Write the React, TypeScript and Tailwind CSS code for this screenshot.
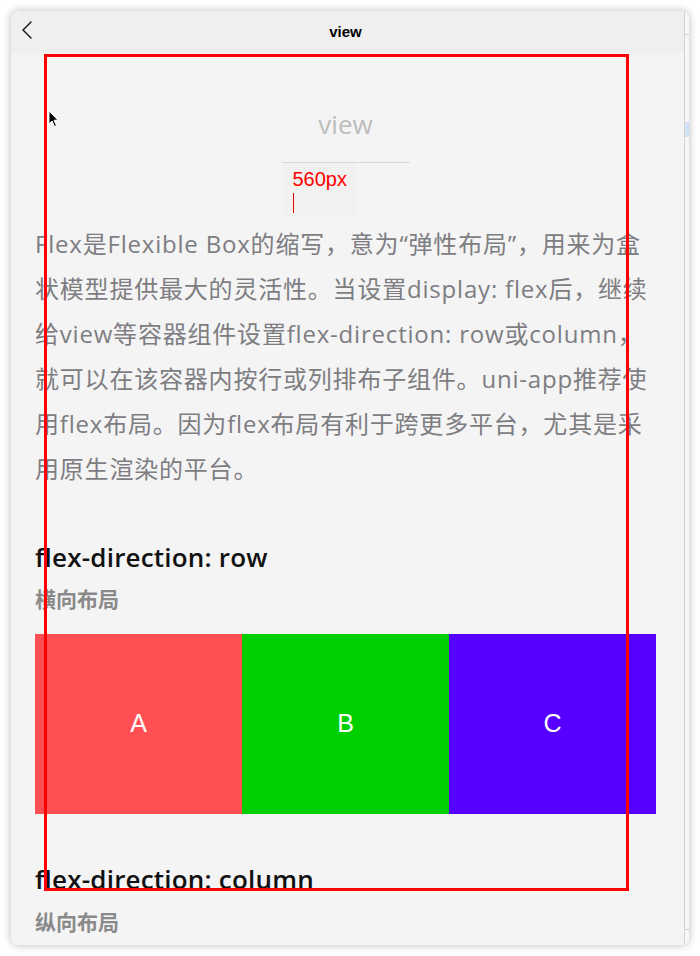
import React from 'react'

const SANS = { fontFamily: "'Open Sans', 'Noto Sans CJK SC', sans-serif" }

const INTRO = [
  'Flex是Flexible Box的缩写，意为“弹性布局”，用来为盒',
  '状模型提供最大的灵活性。当设置display: flex后，继续',
  '给view等容器组件设置flex-direction: row或column，',
  '就可以在该容器内按行或列排布子组件。uni-app推荐使',
  '用flex布局。因为flex布局有利于跨更多平台，尤其是采',
  '用原生渲染的平台。',
]

const BLOCKS = [
  { label: 'A', color: 'bg-[#ff4f53]' },
  { label: 'B', color: 'bg-[#00d000]' },
  { label: 'C', color: 'bg-[#5800ff]' },
]

function BackIcon() {
  return (
    <svg width="12" height="18" viewBox="0 0 12 18" fill="none">
      <path d="M10 1 L2 9 L10 17" stroke="#111" strokeWidth="1.4" strokeLinecap="round" strokeLinejoin="round" />
    </svg>
  )
}

function Cursor() {
  return (
    <svg width="12" height="18" viewBox="0 0 12 18">
      <path d="M1 1 L1 14 L4 11 L6.5 16.5 L8.5 15.5 L6 10.2 L10 10.2 Z" fill="#000" stroke="#fff" strokeWidth="1" />
    </svg>
  )
}

export default function App() {
  return (
    <div className="relative w-[700px] h-[956px] bg-white overflow-hidden pt-[11px] pl-[11px]" style={SANS}>
      {/* window */}
      <div className="flex w-[678px] h-[934px] rounded-[7px] overflow-hidden bg-[#f4f4f4] shadow-[0_0_9px_rgba(0,0,0,0.28)]">
        <div className="flex flex-col w-[673px]">
          {/* nav bar */}
          <div className="relative flex items-center justify-center h-[42px] bg-[#efefef] shrink-0">
            <div className="absolute left-[10px] top-[10px]">
              <BackIcon />
            </div>
            <span className="ml-[-4px] text-[15px] font-semibold text-black" style={{ fontFamily: "'Liberation Sans', sans-serif" }}>view</span>
          </div>

          {/* content */}
          <div className="flex-1 overflow-hidden pl-[24px] pr-[28px] bg-[#f4f4f4]">
            <div className="flex flex-col items-center pt-[55px]">
              <div className="text-[26px] leading-[32px] text-[#bdbdbd]">view</div>
              <div className="w-[128px] mt-[22px] border-t border-[#d9d9d9]">
                <div className="w-[71px] h-[54px] ml-[2px] bg-[#f1f1ef] pl-[9px] pt-[5px]">
                  <div className="text-[20px] leading-[22px] text-[#ff0000]" style={{ fontFamily: "'Liberation Sans', sans-serif" }}>560px</div>
                  <div className="w-[1px] h-[20px] mt-[3px] bg-[#e00000]" />
                </div>
              </div>
            </div>

            <div className="mt-[4px] text-[24px] leading-[45px] tracking-[0.8px] text-[#7d7d82] whitespace-nowrap">
              {INTRO.map((line, i) => (
                <div key={i}>{line}</div>
              ))}
            </div>

            <div className="mt-[48px] text-[26px] leading-[36px] font-semibold tracking-[0.2px] text-[#111]">flex-direction: row</div>
            <div className="mt-[10px] text-[21px] leading-[28px] font-semibold text-[#8a8a8a]">横向布局</div>

            <div className="flex mt-[21px] h-[180px]">
              {BLOCKS.map(b => (
                <div key={b.label} className={`flex-1 flex items-center justify-center ${b.color}`}>
                  <span className="text-[25px] text-white" style={{ fontFamily: "'Liberation Sans', sans-serif" }}>{b.label}</span>
                </div>
              ))}
            </div>

            <div className="mt-[47px] text-[26px] leading-[36px] font-semibold tracking-[0.2px] text-[#111]">flex-direction: column</div>
            <div className="mt-[11px] text-[21px] leading-[28px] font-semibold text-[#8a8a8a]">纵向布局</div>
          </div>
        </div>

        {/* side strip */}
        <div className="flex flex-col w-[5px] border-l border-[#d2d2d2] bg-[#f7f7f7]">
          <div className="h-[24px] border-b border-[#cfcfcf] shrink-0" />
          <div className="h-[87px] shrink-0" />
          <div className="h-[15px] bg-[#d2e2f6] shrink-0" />
          <div className="flex-1" />
          <div className="h-[16px] border-t border-[#cfcfcf] shrink-0" />
        </div>
      </div>

      {/* measurement frame overlay */}
      <div className="absolute left-[44px] top-[54px] w-[585px] h-[837px] border-[3px] border-[#ff0000] pointer-events-none" />

      {/* mouse pointer */}
      <div className="absolute left-[48px] top-[110px]">
        <Cursor />
      </div>
    </div>
  )
}
